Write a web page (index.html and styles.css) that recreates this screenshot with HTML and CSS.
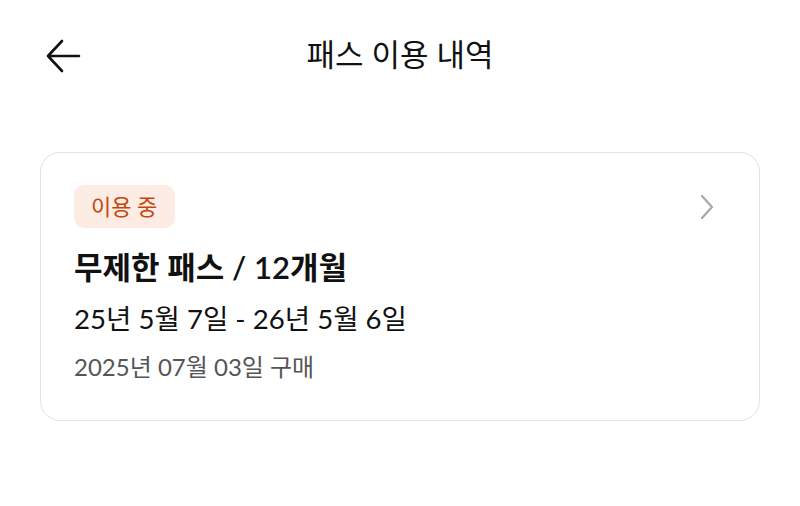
FILE: index.html
```html
<!DOCTYPE html>
<html lang="ko">
<head>
<meta charset="utf-8">
<link rel="stylesheet" href="styles.css">
</head>
<body>
<header class="topbar">
  <button class="back" aria-label="뒤로">
    <svg width="36" height="36" viewBox="0 0 36 36" fill="none" stroke="#111" stroke-width="2.6" stroke-linecap="round" stroke-linejoin="round"><path d="M34 18H3M17 3L3 18l14 15"/></svg>
  </button>
  <h1 class="title">패스 이용 내역</h1>
</header>
<main class="content">
  <section class="card">
    <div class="card-top">
      <span class="badge">이용 중</span>
      <svg class="chev" width="16" height="26" viewBox="0 0 16 26" fill="none" stroke="#a8a8a8" stroke-width="2.2" stroke-linecap="round" stroke-linejoin="round"><path d="M3 2l10 11L3 24"/></svg>
    </div>
    <div class="pass-name">무제한 패스 / 12개월</div>
    <div class="period">25년 5월 7일 - 26년 5월 6일</div>
    <div class="bought">2025년 07월 03일 구매</div>
  </section>
</main>
</body>
</html>
```
FILE: styles.css
```css
* { box-sizing: border-box; }
html, body { margin: 0; padding: 0; background: #fff; }
body {
  width: 800px;
  height: 506px;
  font-family: "Lato", "Noto Sans CJK KR", sans-serif;
  color: #111;
  overflow: hidden;
}
.topbar {
  position: relative;
  height: 112px;
  display: flex;
  align-items: center;
  justify-content: center;
}
.back {
  position: absolute;
  left: 45px;
  top: 38px;
  background: none;
  border: 0;
  padding: 0;
  width: 36px;
  height: 36px;
}
.back svg { display: block; }
.title {
  margin: 0;
  font-size: 31px;
  font-weight: 400;
  line-height: 1;
  margin-top: -4px;
}
.content { padding: 40px 40px 0; }
.card {
  border: 1.5px solid #e2e2e2;
  border-radius: 20px;
  padding: 32px 33px 30px;
  height: 269px;
}
.card-top {
  display: flex;
  justify-content: space-between;
  align-items: center;
}
.badge {
  background: #fdece3;
  color: #c4460c;
  border-radius: 10px;
  font-size: 22px;
  line-height: 43px;
  height: 43px;
  padding: 0 18px 0 17px;
}
.chev { margin-right: 11px; }
.pass-name {
  margin-top: 17px;
  font-size: 31px;
  font-weight: 600;
  line-height: 44px;
}
.period {
  margin-top: 10px;
  font-size: 27.6px;
  line-height: 40px;
}
.bought {
  margin-top: 11px;
  font-size: 24px;
  line-height: 34px;
  color: #555;
}
```
